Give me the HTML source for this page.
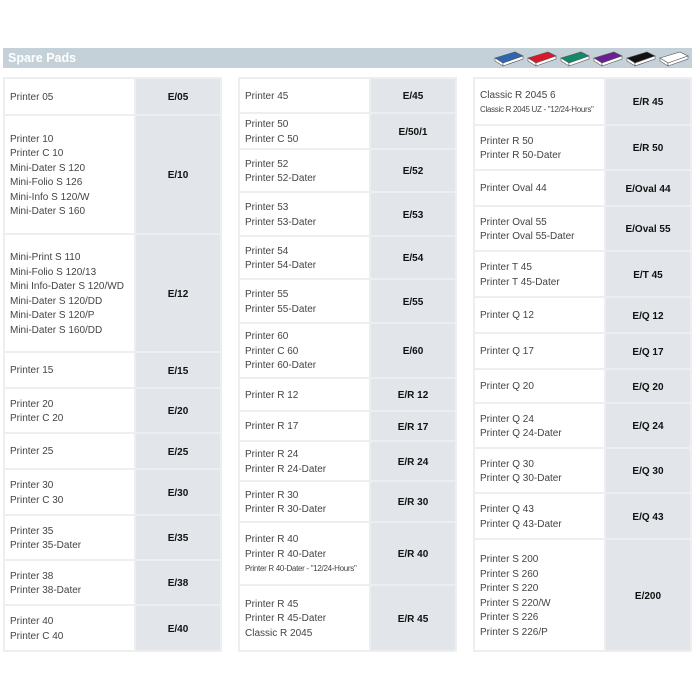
<!DOCTYPE html>
<html><head><meta charset="utf-8"><style>
body{margin:0;width:700px;height:700px;background:#fff;position:relative;overflow:hidden;font-family:"Liberation Sans",sans-serif}
.hdr{position:absolute;left:3px;top:48px;width:689px;height:20px;background:#c5d1d9}
.hdr span{position:absolute;left:5px;top:3px;color:#fff;font-weight:bold;font-size:12.5px}
.col{position:absolute;top:77px;width:215px;padding:2px;background:#eceef0;display:flex;flex-direction:column;gap:2px}
.r{display:flex}
.n{width:124px;background:#fff;padding-left:5px;padding-top:3px;box-sizing:content-box;display:flex;flex-direction:column;justify-content:center;font-size:10px;line-height:14.5px;color:#444;white-space:nowrap;overflow:hidden}
.c{flex:1;margin-left:2px;background:#e2e6ea;display:flex;align-items:center;justify-content:center;font-weight:bold;font-size:10px;color:#111;padding-top:2px}
.s{font-size:8px;letter-spacing:-0.3px;white-space:nowrap}
</style></head><body>
<div class="hdr"><span>Spare Pads</span>
<svg style="position:absolute;left:490px;top:0" width="200" height="20" viewBox="0 0 200 20">
<g stroke="#555" stroke-width="0.6">
<path d="M2 10 L22 4 L30 8 L10 15 Z" fill="#2d66b5"/><path d="M2 10 L10 15 L10 18 L2 13 Z" fill="#fff"/><path d="M10 15 L30 8 L30 11 L10 18Z" fill="#fff"/>
<path d="M35 10 L55 4 L63 8 L43 15 Z" fill="#d8192a"/><path d="M35 10 L43 15 L43 18 L35 13 Z" fill="#fff"/><path d="M43 15 L63 8 L63 11 L43 18Z" fill="#fff"/>
<path d="M68 10 L88 4 L96 8 L76 15 Z" fill="#118a6a"/><path d="M68 10 L76 15 L76 18 L68 13 Z" fill="#fff"/><path d="M76 15 L96 8 L96 11 L76 18Z" fill="#fff"/>
<path d="M101 10 L121 4 L129 8 L109 15 Z" fill="#6a2093"/><path d="M101 10 L109 15 L109 18 L101 13 Z" fill="#fff"/><path d="M109 15 L129 8 L129 11 L109 18Z" fill="#fff"/>
<path d="M134 10 L154 4 L162 8 L142 15 Z" fill="#111"/><path d="M134 10 L142 15 L142 18 L134 13 Z" fill="#fff"/><path d="M142 15 L162 8 L162 11 L142 18Z" fill="#fff"/>
<path d="M167 10 L187 4 L195 8 L175 15 Z" fill="#fff"/><path d="M167 10 L175 15 L175 18 L167 13 Z" fill="#fff"/><path d="M175 15 L195 8 L195 11 L175 18Z" fill="#fff"/>
</g></svg></div>

<div class="col" style="left:3px">
<div class="r" style="height:35px"><div class="n">Printer 05</div><div class="c">E/05</div></div>
<div class="r" style="height:117px"><div class="n">Printer 10<br>Printer C 10<br>Mini-Dater S 120<br>Mini-Folio S 126<br>Mini-Info S 120/W<br>Mini-Dater S 160</div><div class="c">E/10</div></div>
<div class="r" style="height:116px"><div class="n">Mini-Print S 110<br>Mini-Folio S 120/13<br>Mini Info-Dater S 120/WD<br>Mini-Dater S 120/DD<br>Mini-Dater S 120/P<br>Mini-Dater S 160/DD</div><div class="c">E/12</div></div>
<div class="r" style="height:34px"><div class="n">Printer 15</div><div class="c">E/15</div></div>
<div class="r" style="height:43px"><div class="n">Printer 20<br>Printer C 20</div><div class="c">E/20</div></div>
<div class="r" style="height:34px"><div class="n">Printer 25</div><div class="c">E/25</div></div>
<div class="r" style="height:44px"><div class="n">Printer 30<br>Printer C 30</div><div class="c">E/30</div></div>
<div class="r" style="height:43px"><div class="n">Printer 35<br>Printer 35-Dater</div><div class="c">E/35</div></div>
<div class="r" style="height:43px"><div class="n">Printer 38<br>Printer 38-Dater</div><div class="c">E/38</div></div>
<div class="r" style="height:44px"><div class="n">Printer 40<br>Printer C 40</div><div class="c">E/40</div></div>
</div>

<div class="col" style="left:238px">
<div class="r" style="height:33px"><div class="n">Printer 45</div><div class="c">E/45</div></div>
<div class="r" style="height:34px"><div class="n">Printer 50<br>Printer C 50</div><div class="c">E/50/1</div></div>
<div class="r" style="height:41px"><div class="n">Printer 52<br>Printer 52-Dater</div><div class="c">E/52</div></div>
<div class="r" style="height:42px"><div class="n">Printer 53<br>Printer 53-Dater</div><div class="c">E/53</div></div>
<div class="r" style="height:41px"><div class="n">Printer 54<br>Printer 54-Dater</div><div class="c">E/54</div></div>
<div class="r" style="height:42px"><div class="n">Printer 55<br>Printer 55-Dater</div><div class="c">E/55</div></div>
<div class="r" style="height:53px"><div class="n">Printer 60<br>Printer C 60<br>Printer 60-Dater</div><div class="c">E/60</div></div>
<div class="r" style="height:31px"><div class="n">Printer R 12</div><div class="c">E/R 12</div></div>
<div class="r" style="height:28px"><div class="n">Printer R 17</div><div class="c">E/R 17</div></div>
<div class="r" style="height:38px"><div class="n">Printer R 24<br>Printer R 24-Dater</div><div class="c">E/R 24</div></div>
<div class="r" style="height:39px"><div class="n">Printer R 30<br>Printer R 30-Dater</div><div class="c">E/R 30</div></div>
<div class="r" style="height:61px"><div class="n">Printer R 40<br>Printer R 40-Dater<br><span class="s">Printer R 40-Dater - "12/24-Hours"</span></div><div class="c">E/R 40</div></div>
<div class="r" style="height:64px"><div class="n">Printer R 45<br>Printer R 45-Dater<br>Classic R 2045</div><div class="c">E/R 45</div></div>
</div>

<div class="col" style="left:473px">
<div class="r" style="height:45px"><div class="n">Classic R 2045 6<br><span class="s">Classic R 2045 UZ - "12/24-Hours"</span></div><div class="c">E/R 45</div></div>
<div class="r" style="height:43px"><div class="n">Printer R 50<br>Printer R 50-Dater</div><div class="c">E/R 50</div></div>
<div class="r" style="height:34px"><div class="n">Printer Oval 44</div><div class="c">E/Oval 44</div></div>
<div class="r" style="height:43px"><div class="n">Printer Oval 55<br>Printer Oval 55-Dater</div><div class="c">E/Oval 55</div></div>
<div class="r" style="height:44px"><div class="n">Printer T 45<br>Printer T 45-Dater</div><div class="c">E/T 45</div></div>
<div class="r" style="height:34px"><div class="n">Printer Q 12</div><div class="c">E/Q 12</div></div>
<div class="r" style="height:34px"><div class="n">Printer Q 17</div><div class="c">E/Q 17</div></div>
<div class="r" style="height:32px"><div class="n">Printer Q 20</div><div class="c">E/Q 20</div></div>
<div class="r" style="height:43px"><div class="n">Printer Q 24<br>Printer Q 24-Dater</div><div class="c">E/Q 24</div></div>
<div class="r" style="height:43px"><div class="n">Printer Q 30<br>Printer Q 30-Dater</div><div class="c">E/Q 30</div></div>
<div class="r" style="height:44px"><div class="n">Printer Q 43<br>Printer Q 43-Dater</div><div class="c">E/Q 43</div></div>
<div class="r" style="height:110px"><div class="n">Printer S 200<br>Printer S 260<br>Printer S 220<br>Printer S 220/W<br>Printer S 226<br>Printer S 226/P</div><div class="c">E/200</div></div>
</div>
</body></html>
